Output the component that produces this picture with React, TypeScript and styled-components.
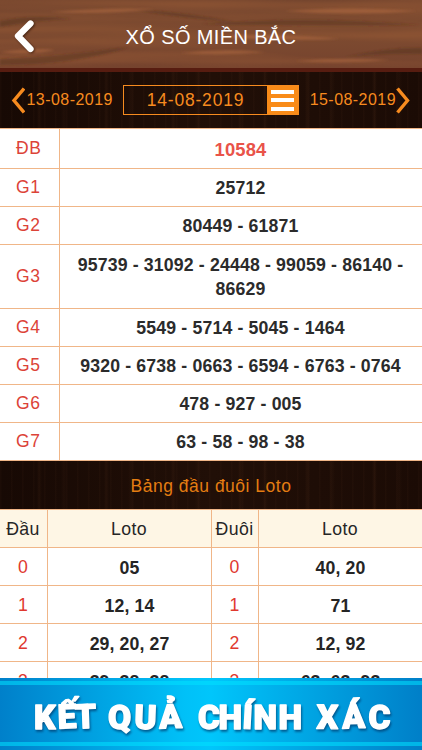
import React from 'react';
import styled, { createGlobalStyle } from 'styled-components';

const line = '#f0b688';

const GlobalStyle = createGlobalStyle`
  * { box-sizing: border-box; }
  body { margin: 0; background: #fff; overflow: hidden; }
`;

const Screen = styled.div`
  width: 422px;
  height: 750px;
  display: flex;
  flex-direction: column;
  overflow: hidden;
  background: #fff;
  font-family: 'Liberation Sans', Arial, sans-serif;
`;

const Header = styled.header`
  position: relative;
  flex: none;
  height: 72px;
  border-bottom: 4px solid #571c10;
  display: flex;
  align-items: center;
  justify-content: center;
  background: #7b4a34;
`;

const Grain = styled.svg`
  position: absolute;
  inset: 0;
  width: 100%;
  height: 100%;
`;

const BackIcon = styled.svg`
  position: absolute;
  left: 12px;
  top: 18px;
  filter: drop-shadow(1px 1px 1px rgba(30, 10, 0, 0.6));
`;

const Title = styled.h1`
  position: relative;
  margin: 5px 0 0;
  font-size: 20px;
  font-weight: 400;
  line-height: 24px;
  letter-spacing: 0.37px;
  color: #fff;
`;

const DarkWood = styled.div`
  flex: none;
  background:
    repeating-linear-gradient(90deg, transparent 0 37px, rgba(120, 70, 40, 0.1) 39px, transparent 42px 61px, rgba(110, 65, 40, 0.08) 64px, transparent 67px),
    repeating-linear-gradient(90deg, rgba(110, 65, 40, 0.06) 0 1px, transparent 2px 11px),
    linear-gradient(90deg, #170904, #210f07 50%, #1b0b05);
`;

const DateBar = styled(DarkWood)`
  height: 56px;
  padding: 0 12px 0 11px;
  display: grid;
  grid-template-columns: 112px 176px 111px;
  align-items: center;
  color: #f78b1f;
`;

const DateLink = styled.div<{ $end?: boolean }>`
  display: flex;
  align-items: center;
  justify-content: ${(p) => (p.$end ? 'flex-end' : 'flex-start')};
  gap: ${(p) => (p.$end ? 0 : 1.5)}px;
  font-size: 16px;
  letter-spacing: 0.45px;
  white-space: nowrap;
`;

const DatePicker = styled.div`
  height: 30px;
  border: 1px solid #f78b1f;
  display: flex;
`;

const Current = styled.span`
  flex: 1;
  text-align: center;
  line-height: 29px;
  font-size: 17.5px;
  letter-spacing: 0.8px;
`;

const MenuButton = styled.div`
  width: 31px;
  background: #f98b18;
  display: flex;
  flex-direction: column;
  align-items: center;
  justify-content: center;
  gap: 4.5px;
`;

const MenuBar = styled.i`
  width: 23px;
  height: 4px;
  background: #fff;
`;

const Results = styled.div`
  flex: none;
  border-top: 1px solid ${line};
`;

const ResultRow = styled.div<{ $h: number }>`
  height: ${(p) => p.$h}px;
  display: grid;
  grid-template-columns: 60px 1fr;
  border-bottom: 1px solid ${line};
`;

const Prize = styled.div`
  display: flex;
  align-items: center;
  padding-left: 16px;
  border-right: 1px solid ${line};
  font-size: 17.5px;
  letter-spacing: 0.7px;
  color: #dc4338;
`;

const Numbers = styled.div<{ $special?: boolean }>`
  display: flex;
  align-items: center;
  justify-content: center;
  padding: ${(p) => (p.$special ? '3px' : '1px')} 11px 0 10px;
  text-align: center;
  font-weight: 700;
  font-size: ${(p) => (p.$special ? 18.4 : 17.7)}px;
  line-height: 24px;
  letter-spacing: 0.15px;
  color: ${(p) => (p.$special ? '#e95349' : '#2b2b2b')};
`;

const SectionTitle = styled(DarkWood)`
  height: 48px;
  line-height: 50px;
  text-align: center;
  font-size: 17.5px;
  letter-spacing: 0.5px;
  color: #e47d12;
`;

const Loto = styled.div`
  flex: none;
  height: 169px;
  overflow: hidden;
  border-top: 1px solid ${line};
`;

const LotoRow = styled.div<{ $head?: boolean }>`
  height: 38px;
  display: grid;
  grid-template-columns: 48px 164px 47px 163px;
  background: ${(p) => (p.$head ? '#fef6e5' : '#fff')};
  border-bottom: 1px solid ${line};
`;

const Cell = styled.div<{ $kind: 'head' | 'digit' | 'value' }>`
  display: flex;
  align-items: center;
  justify-content: center;
  padding: ${(p) => (p.$kind === 'value' ? '3px 0 0' : '1px 1px 0 0')};
  border-right: 1px solid ${line};
  font-weight: ${(p) => (p.$kind === 'value' ? 700 : 400)};
  font-size: 17.7px;
  letter-spacing: ${(p) => (p.$kind === 'head' ? 0.4 : 0.1)}px;
  color: ${(p) => (p.$kind === 'digit' ? '#e0392f' : '#252525')};
  &:last-child { border-right: 0; }
`;

const Banner = styled.footer`
  flex: none;
  height: 72px;
  padding: 3px 0 4px;
  background: linear-gradient(90deg, #0080ca, #00c1f8 44%, #00c6fb 50%, #00bdf5 56%, #007fc8);
`;

const BannerInner = styled.div`
  height: 65px;
  border: solid rgba(0, 226, 255, 0.55);
  border-width: 4px 0;
`;

const Slogan = styled.svg`
  display: block;
  filter: drop-shadow(1px 2px 1px rgba(0, 55, 105, 0.7));
`;

const results: [string, string, number][] = [
  ['ĐB', '10584', 40],
  ['G1', '25712', 38],
  ['G2', '80449 - 61871', 38],
  ['G3', '95739 - 31092 - 24448 - 99059 - 86140 - 86629', 64],
  ['G4', '5549 - 5714 - 5045 - 1464', 38],
  ['G5', '9320 - 6738 - 0663 - 6594 - 6763 - 0764', 38],
  ['G6', '478 - 927 - 005', 38],
  ['G7', '63 - 58 - 98 - 38', 38],
];

const loto = [
  ['0', '05', '0', '40, 20'],
  ['1', '12, 14', '1', '71'],
  ['2', '29, 20, 27', '2', '12, 92'],
  ['3', '39, 38, 38', '3', '63, 63, 93'],
];

const slogan: { word: string; x: string; rotate: string }[] = [
  { word: 'KẾT', x: '34 58 75.5', rotate: '0 -2 -2' },
  { word: 'QUẢ', x: '108 134 159.5', rotate: '0 2 -2' },
  { word: 'CHÍNH', x: '198 218.500 242 253.500 278.500', rotate: '0 0 3 0 0' },
  { word: 'XÁC', x: '316.500 342.500 368.500', rotate: '1 -2 0' },
];

export default function App() {
  return (
    <>
      <GlobalStyle />
      <Screen>
        <Header>
          <Grain viewBox="0 0 422 68" preserveAspectRatio="none">
            <defs>
              <linearGradient id="base" x2="0" y2="1">
                <stop stopColor="#74452e" />
                <stop offset=".5" stopColor="#7e4b30" />
                <stop offset="1" stopColor="#75432e" />
              </linearGradient>
              <filter id="wood" x="0" y="0" width="100%" height="100%" colorInterpolationFilters="sRGB">
                <feTurbulence type="fractalNoise" baseFrequency=".004 .075" numOctaves="2" seed="8" />
                <feColorMatrix values="0 0 0 0 .64  0 0 0 0 .38  0 0 0 0 .22  2 0 0 0 -.75" />
              </filter>
              <filter id="soft" x="-10%" y="-50%" width="120%" height="200%">
                <feGaussianBlur stdDeviation="1" />
              </filter>
            </defs>
            <rect width="422" height="68" fill="url(#base)" />
            <rect width="422" height="68" filter="url(#wood)" opacity=".45" />
            <g filter="url(#soft)">
              <g fill="#50301f" opacity=".42">
                <path d="M0 21q35-7 72-2-35 1-72 8z" />
                <path d="M130 9q60 4 105 13-55-4-105-13z" />
                <path d="M200 24q110-8 222 1-110 2-222-1z" />
                <path d="M345 57q45-10 77-9v6q-40-1-77 3z" />
                <path d="M0 59q65-3 130-12-55 18-130 18z" />
              </g>
              <g fill="#b46d42" opacity=".5">
                <path d="M180 53q45-5 85-1-38 4-85 1z" />
                <path d="M285 11q60-5 132 0-66 5-132 0z" />
                <path d="M0 52q35-5 55-2-25 6-55 2z" />
                <path d="M220 36q65-3 120 3-60 3-120-3z" />
                <path d="M295 61q50-4 95-1-45 4-95 1z" />
                <path d="M50 12q60-5 105-3-52 6-105 3z" />
              </g>
            </g>
          </Grain>
          <BackIcon width="26" height="36" viewBox="0 0 26 36" fill="none">
            <path d="M18.500 5.500 6 18 18.500 31" stroke="#fff" strokeWidth="6.300" strokeLinecap="round" strokeLinejoin="round" />
          </BackIcon>
          <Title>XỔ SỐ MIỀN BẮC</Title>
        </Header>
        <DateBar>
          <DateLink>
            <svg width="14" height="27" viewBox="0 0 14 27" fill="none">
              <path d="M13 1.500 3 13.500l10 12" stroke="#f78b1f" strokeWidth="3.400" />
            </svg>
            13-08-2019
          </DateLink>
          <DatePicker>
            <Current>14-08-2019</Current>
            <MenuButton><MenuBar /><MenuBar /><MenuBar /></MenuButton>
          </DatePicker>
          <DateLink $end>
            15-08-2019
            <svg width="14" height="27" viewBox="0 0 14 27" fill="none">
              <path d="m1.500 1.500 10 12-10 12" stroke="#f78b1f" strokeWidth="3.400" />
            </svg>
          </DateLink>
        </DateBar>
        <Results>
          {results.map(([prize, numbers, h]) => (
            <ResultRow key={prize} $h={h}>
              <Prize>{prize}</Prize>
              <Numbers $special={prize === 'ĐB'}>{numbers}</Numbers>
            </ResultRow>
          ))}
        </Results>
        <SectionTitle>Bảng đầu đuôi Loto</SectionTitle>
        <Loto>
          <LotoRow $head>
            {['Đầu', 'Loto', 'Đuôi', 'Loto'].map((t, i) => <Cell key={i} $kind="head">{t}</Cell>)}
          </LotoRow>
          {loto.map((row) => (
            <LotoRow key={row[0]}>
              {row.map((t, i) => <Cell key={i} $kind={i % 2 ? 'value' : 'digit'}>{t}</Cell>)}
            </LotoRow>
          ))}
        </Loto>
        <Banner>
          <BannerInner>
            <Slogan width="422" height="57" viewBox="0 0 422 57">
              <g fill="#fff" stroke="#fff" strokeWidth="1.400" strokeLinejoin="round" fontFamily="Roboto, sans-serif" fontWeight="900" fontSize="33.500">
                {slogan.map(({ word, x, rotate }) => (
                  <text key={word} x={x} y="43.500" rotate={rotate}>{word}</text>
                ))}
              </g>
            </Slogan>
          </BannerInner>
        </Banner>
      </Screen>
    </>
  );
}
